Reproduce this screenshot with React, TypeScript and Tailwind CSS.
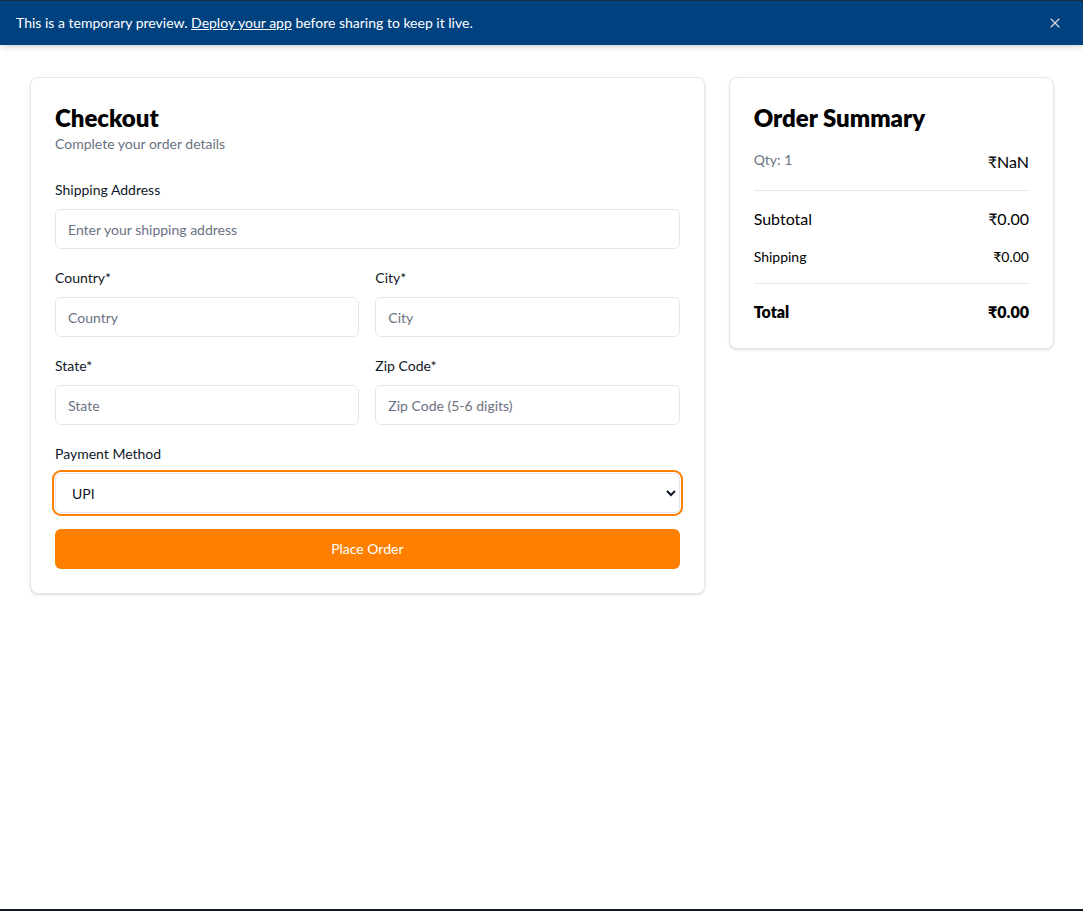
import React, { useState } from 'react';
import { X } from 'lucide-react';

const font = { fontFamily: 'Lato, "Noto Sans", "DejaVu Sans", sans-serif' };

const inputCls =
  'w-full h-10 px-3 bg-white border border-gray-200 rounded-md text-sm text-gray-800 placeholder-gray-500 outline-none';

const Field: React.FC<{ label: string; placeholder: string }> = ({ label, placeholder }) => (
  <div>
    <label className="block text-sm text-gray-900 mb-[9px]">{label}</label>
    <input type="text" placeholder={placeholder} className={inputCls} />
  </div>
);

const App: React.FC = () => {
  const [payment, setPayment] = useState('UPI');
  const [showBanner, setShowBanner] = useState(true);

  return (
    <div className="min-h-screen bg-white" style={font}>
      {showBanner && (
        <div className="relative z-10 h-[45px] bg-[#00417f] border-t border-[#1b2a40] shadow-md flex items-center justify-between pl-4 pr-5">
          <p className="text-sm text-white">
            This is a temporary preview. <span className="underline">Deploy your app</span> before sharing to keep it live.
          </p>
          <button onClick={() => setShowBanner(false)} className="text-gray-300" aria-label="Close">
            <X className="w-4 h-4" strokeWidth={1.75} />
          </button>
        </div>
      )}

      <main className="min-h-[864px] pt-8 pl-px">
        <div className="max-w-5xl mx-auto grid grid-cols-3 gap-6 items-start">
          {/* Checkout form */}
          <div className="col-span-2 bg-white border border-gray-200 rounded-lg shadow-sm p-6">
            <h1 className="text-2xl font-extrabold text-black leading-8">Checkout</h1>
            <p className="text-sm text-gray-500 mb-[26px]">Complete your order details</p>

            <div className="flex flex-col gap-[19px]">
              <Field label="Shipping Address" placeholder="Enter your shipping address" />
              <div className="grid grid-cols-2 gap-4">
                <Field label="Country*" placeholder="Country" />
                <Field label="City*" placeholder="City" />
              </div>
              <div className="grid grid-cols-2 gap-4">
                <Field label="State*" placeholder="State" />
                <Field label="Zip Code*" placeholder="Zip Code (5-6 digits)" />
              </div>
              <div>
                <label className="block text-sm text-gray-900 mb-[9px]">Payment Method</label>
                <select
                  value={payment}
                  onChange={(e) => setPayment(e.target.value)}
                  className="w-full h-10 px-3 bg-white border border-gray-200 rounded-md text-sm text-gray-900 outline-none ring-2 ring-[#ff8000] ring-offset-1"
                >
                  <option value="UPI">UPI</option>
                  <option value="Card">Card</option>
                  <option value="COD">Cash on Delivery</option>
                </select>
              </div>
            </div>

            <button className="mt-4 w-full h-10 bg-[#ff8000] text-white text-sm rounded-md">Place Order</button>
          </div>

          {/* Summary */}
          <div className="bg-white border border-gray-200 rounded-lg shadow-sm p-6">
            <h2 className="text-2xl font-extrabold text-black leading-8 mb-px">Order Summary</h2>
            <div className="mt-4 flex justify-between items-start">
              <span className="text-sm text-gray-500">Qty: 1</span>
              <span className="text-base text-black leading-6">₹NaN</span>
            </div>
            <div className="border-t border-gray-200 my-4" />
            <div className="flex justify-between text-base text-black leading-6">
              <span>Subtotal</span>
              <span>₹0.00</span>
            </div>
            <div className="mt-4 flex justify-between text-sm text-black">
              <span>Shipping</span>
              <span>₹0.00</span>
            </div>
            <div className="border-t border-gray-200 my-4" />
            <div className="flex justify-between text-base font-extrabold text-black leading-6">
              <span>Total</span>
              <span>₹0.00</span>
            </div>
          </div>
        </div>
      </main>

      <footer className="bg-gray-900 h-40" />
    </div>
  );
};

export default App;
